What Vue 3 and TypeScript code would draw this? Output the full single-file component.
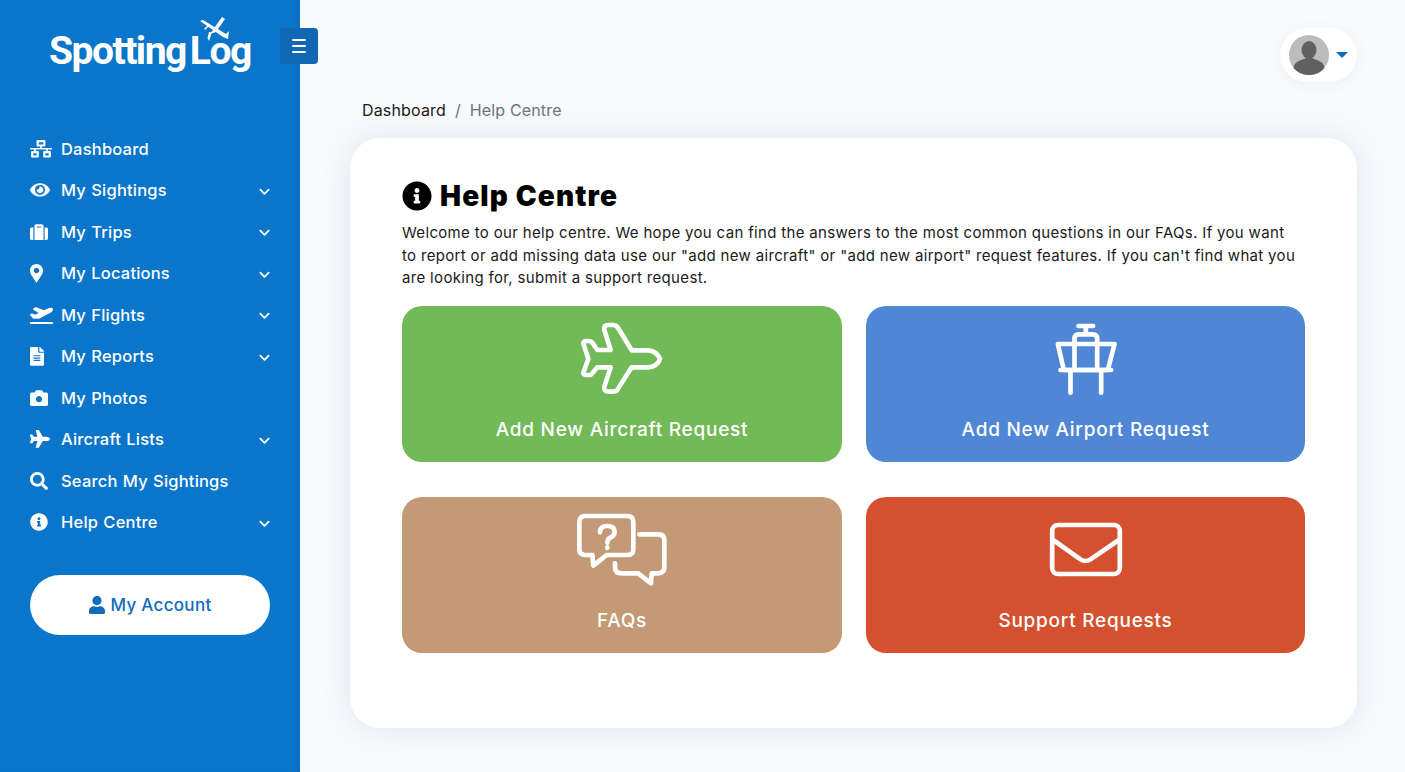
<template>
  <div class="app">
    <aside class="sidebar">
      <div class="logo">
        <span class="logo-text">Spotting<span class="logo-gap">Log</span></span>
        <svg class="logo-plane" viewBox="0 0 31 26" fill="#fff">
          <path d="M1 5 L4 4 L27 18 L30 15 L29 23 L24 21 Z" />
          <path d="M23 1 L26 3 L17 16 L11 18 Z" />
          <path d="M13 16 L10 25 L8.5 22 L10 16 Z" />
          <path d="M9 9 L10 10 L6 14 L5 13 Z" />
        </svg>
      </div>
      <button class="toggle" type="button" aria-label="Toggle menu">
        <span></span><span></span><span></span>
      </button>

      <nav class="nav">
        <a v-for="item in navItems" :key="item.label" class="nav-item">
          <span class="nav-icon">
            <svg :viewBox="item.box" :width="item.size" fill="#fff"><path :d="item.d" /></svg>
          </span>
          <span class="nav-label">{{ item.label }}</span>
          <svg v-if="item.sub" class="chev" viewBox="0 0 12 8" width="11" height="8">
            <path d="M1.5 1.5 L6 6 L10.5 1.5" fill="none" stroke="#fff" stroke-width="2" stroke-linecap="round" stroke-linejoin="round" />
          </svg>
        </a>
      </nav>

      <button class="account" type="button">
        <svg viewBox="0 0 448 512" width="16" fill="#0f6cbd"><path :d="icons.user" /></svg>
        <span>My Account</span>
      </button>
    </aside>

    <main class="main">
      <header class="topbar">
        <div class="profile">
          <svg viewBox="0 0 40 40" width="40" height="40">
            <circle cx="20" cy="20" r="20" fill="#bcbcbc" />
            <ellipse cx="20" cy="15" rx="7.5" ry="9" fill="#616161" />
            <path d="M4.5 33 C5 26 13 25 17 23 H23 C27 25 35 26 35.5 33 A20 20 0 0 1 20 40 A20 20 0 0 1 4.5 33 Z" fill="#616161" />
          </svg>
          <span class="caret"></span>
        </div>
      </header>

      <div class="crumbs">
        <span class="crumb-link">Dashboard</span>
        <span class="crumb-sep">/</span>
        <span class="crumb-now">Help Centre</span>
      </div>

      <section class="card">
        <h1 class="title">
          <svg viewBox="0 0 512 512" width="30" height="30" fill="#000"><path :d="icons.info" /></svg>
          <span>Help Centre</span>
        </h1>
        <p class="intro">
          Welcome to our help centre. We hope you can find the answers to the most common questions in our FAQs. If you want<br />
          to report or add missing data use our "add new aircraft" or "add new airport" request features. If you can't find what you<br />
          are looking for, submit a support request.
        </p>

        <div class="tiles">
          <a class="tile green">
            <svg class="tile-icon" viewBox="6 0 480 270">
              <path d="M360 147 Q352 124 325 121 H275 L233 52 Q228 45 218 45 H205 Q190 45 193 60 L212 120 H172 L157 98 Q154 93 148 93 H138 Q128 93 131 103 L145 147 L131 185 Q128 195 138 195 H148 Q154 195 157 190 L172 172 H212 L193 230 Q190 245 205 245 H218 Q228 245 233 238 L275 172 H325 Q352 170 360 147 Z" />
            </svg>
            <span>Add New Aircraft Request</span>
          </a>
          <a class="tile blue">
            <svg class="tile-icon" viewBox="-13.5 0 480 270">
              <path d="M204 48 H248 M226 48 V72 M192 100 V86 Q192 73 205 73 H247 Q260 73 260 86 V100" />
              <path d="M142 102 H312 L292 180 H160 Z" />
              <path d="M150 180 H302 M192 102 V180 M260 102 V180 M180 180 V248 M272 180 V248" />
            </svg>
            <span>Add New Airport Request</span>
          </a>
          <a class="tile tan">
            <svg class="tile-icon" viewBox="-24 -12 480 270">
              <path d="M106 33 H232 Q250 33 250 51 V132 Q250 150 232 150 H170 L130 182 L127 150 H106 Q88 150 88 132 V51 Q88 33 106 33 Z" />
              <path d="M268 88 H325 Q343 88 343 106 V187 Q343 205 325 205 H305 L303 235 L265 205 H215 Q195 205 195 185 V175" />
              <path d="M150 82 Q150 63 172 63 Q194 63 194 81 Q194 92 182 97 Q172 102 172 113" />
              <path d="M172 127 V129" />
            </svg>
            <span>FAQs</span>
          </a>
          <a class="tile red">
            <svg class="tile-icon" viewBox="-73.5 -27 480 270">
              <rect x="65" y="45" width="203" height="147" rx="18" />
              <path d="M68 90 L150 148 Q165 158 180 148 L265 90" />
            </svg>
            <span>Support Requests</span>
          </a>
        </div>
      </section>
    </main>
  </div>
</template>

<script setup lang="ts">
// Font Awesome style glyphs for the side menu
const icons = {
  network: 'M640 264v-16c0-8.84-7.16-16-16-16H344v-40h72c17.67 0 32-14.33 32-32V32c0-17.67-14.33-32-32-32H224c-17.67 0-32 14.33-32 32v128c0 17.67 14.33 32 32 32h72v40H16c-8.84 0-16 7.16-16 16v16c0 8.84 7.16 16 16 16h104v40H64c-17.67 0-32 14.33-32 32v128c0 17.67 14.33 32 32 32h160c17.67 0 32-14.33 32-32V352c0-17.67-14.33-32-32-32h-56v-40h304v40h-56c-17.67 0-32 14.33-32 32v128c0 17.67 14.33 32 32 32h160c17.67 0 32-14.33 32-32V352c0-17.67-14.33-32-32-32h-56v-40h104c8.84 0 16-7.16 16-16zM256 128V64h128v64H256zm-64 320H96v-64h96v64zm352 0h-96v-64h96v64z',
  eye: 'M572.52 241.4C518.29 135.59 410.93 64 288 64S57.68 135.64 3.48 241.41a32.35 32.35 0 0 0 0 29.19C57.71 376.41 165.07 448 288 448s230.32-71.64 284.52-177.41a32.35 32.35 0 0 0 0-29.19zM288 400a144 144 0 1 1 144-144 143.93 143.93 0 0 1-144 144zm0-240a95.31 95.31 0 0 0-25.31 3.79 47.85 47.85 0 0 1-66.9 66.9A95.78 95.78 0 1 0 288 160z',
  suitcase: 'M128 480h256V80c0-26.5-21.5-48-48-48H176c-26.5 0-48 21.5-48 48v400zm64-384h128v32H192V96zm320 80v256c0 26.5-21.5 48-48 48h-48V128h48c26.5 0 48 21.5 48 48zM96 480H48c-26.5 0-48-21.5-48-48V176c0-26.5 21.5-48 48-48h48v352z',
  marker: 'M172.268 501.67C26.97 291.031 0 256 0 176 0 78.798 78.798 0 176 0s176 78.798 176 176c0 80-26.97 115.031-172.268 325.67-9.535 13.774-29.93 13.773-39.464 0zM176 248c39.765 0 72-32.235 72-72s-32.235-72-72-72-72 32.235-72 72 32.235 72 72 72z',
  departure: 'M624 448H16c-8.84 0-16 7.16-16 16v32c0 8.84 7.16 16 16 16h608c8.84 0 16-7.16 16-16v-32c0-8.84-7.16-16-16-16zM80.55 341.27c6.28 6.84 15.1 10.72 24.33 10.71l130.54-.18a65.62 65.62 0 0 0 29.64-7.12l290.96-147.65c26.74-13.57 50.71-32.94 67.02-58.31 18.31-28.48 20.3-49.09 13.07-63.65-7.21-14.57-24.74-25.27-58.25-27.45-29.85-1.94-59.54 5.92-86.28 19.48l-98.51 49.99-218.7-82.06a17.799 17.799 0 0 0-18-1.11L90.62 67.29c-10.67 5.41-13.25 19.65-5.17 28.53l156.22 98.1-103.21 52.38-72.35-36.47a17.804 17.804 0 0 0-16.07.02L9.91 230.22c-10.44 5.3-13.19 19.12-5.57 28.08l76.21 82.97z',
  file: 'M224 136V0H24C10.7 0 0 10.7 0 24v464c0 13.3 10.7 24 24 24h336c13.3 0 24-10.7 24-24V160H248c-13.2 0-24-10.8-24-24zm64 236c0 6.6-5.4 12-12 12H108c-6.6 0-12-5.4-12-12v-8c0-6.6 5.4-12 12-12h168c6.6 0 12 5.4 12 12v8zm0-64c0 6.6-5.4 12-12 12H108c-6.6 0-12-5.4-12-12v-8c0-6.6 5.4-12 12-12h168c6.6 0 12 5.4 12 12v8zm0-72v8c0 6.6-5.4 12-12 12H108c-6.6 0-12-5.4-12-12v-8c0-6.6 5.4-12 12-12h168c6.6 0 12 5.4 12 12zm96-114.1v6.1H256V0h6.1c6.4 0 12.5 2.5 17 7l97.9 98c4.5 4.5 7 10.6 7 16.9z',
  camera: 'M512 144v288c0 26.5-21.5 48-48 48H48c-26.5 0-48-21.5-48-48V144c0-26.5 21.5-48 48-48h88l12.3-32.9c7-18.7 24.9-31.1 44.9-31.1h125.5c20 0 37.9 12.4 44.9 31.1L376 96h88c26.5 0 48 21.5 48 48zM344 288c0-48.5-39.5-88-88-88s-88 39.5-88 88 39.5 88 88 88 88-39.5 88-88z',
  plane: 'M480 192H365.71L260.61 8.06A16.014 16.014 0 0 0 246.71 0h-65.5c-10.63 0-18.3 10.17-15.38 20.39L214.86 192H112l-43.2-57.6c-3.02-4.03-7.77-6.4-12.8-6.4H16.01C5.6 128-2.04 137.78.49 147.88L32 256 .49 364.12C-2.04 374.22 5.6 384 16.01 384H56c5.04 0 9.78-2.37 12.8-6.4L112 320h102.86l-49.03 171.6c-2.92 10.22 4.75 20.4 15.38 20.4h65.5c5.74 0 11.04-3.08 13.89-8.06L365.71 320H480c35.35 0 96-28.65 96-64s-60.65-64-96-64z',
  search: 'M505 442.7L405.3 343c-4.5-4.5-10.6-7-17-7H372c27.6-35.3 44-79.7 44-128C416 93.1 322.9 0 208 0S0 93.1 0 208s93.1 208 208 208c48.3 0 92.7-16.4 128-44v16.3c0 6.4 2.5 12.5 7 17l99.7 99.7c9.4 9.4 24.6 9.4 33.9 0l28.3-28.3c9.4-9.4 9.4-24.6.1-34zM208 336c-70.7 0-128-57.2-128-128 0-70.7 57.2-128 128-128 70.7 0 128 57.2 128 128 0 70.7-57.2 128-128 128z',
  info: 'M256 8C119.043 8 8 119.083 8 256c0 136.997 111.043 248 248 248s248-111.003 248-248C504 119.083 392.957 8 256 8zm0 110c23.196 0 42 18.804 42 42s-18.804 42-42 42-42-18.804-42-42 18.804-42 42-42zm56 254c0 6.627-5.373 12-12 12h-88c-6.627 0-12-5.373-12-12v-24c0-6.627 5.373-12 12-12h12v-64h-12c-6.627 0-12-5.373-12-12v-24c0-6.627 5.373-12 12-12h64c6.627 0 12 5.373 12 12v100h12c6.627 0 12 5.373 12 12v24z',
  user: 'M224 256c70.7 0 128-57.3 128-128S294.7 0 224 0 96 57.3 96 128s57.3 128 128 128zm89.6 32h-16.7c-22.2 10.2-46.9 16-72.9 16s-50.6-5.8-72.9-16h-16.7C60.2 288 0 348.2 0 422.4V464c0 26.5 21.5 48 48 48h352c26.5 0 48-21.5 48-48v-41.6c0-74.2-60.2-134.4-134.4-134.4z',
}

const navItems = [
  { label: 'Dashboard', d: icons.network, box: '0 0 640 512', size: 22, sub: false },
  { label: 'My Sightings', d: icons.eye, box: '0 0 576 512', size: 20, sub: true },
  { label: 'My Trips', d: icons.suitcase, box: '0 0 512 512', size: 18, sub: true },
  { label: 'My Locations', d: icons.marker, box: '0 0 352 512', size: 13, sub: true },
  { label: 'My Flights', d: icons.departure, box: '0 0 640 512', size: 23, sub: true },
  { label: 'My Reports', d: icons.file, box: '0 0 384 512', size: 14, sub: true },
  { label: 'My Photos', d: icons.camera, box: '0 0 512 512', size: 18, sub: false },
  { label: 'Aircraft Lists', d: icons.plane, box: '0 0 576 512', size: 20, sub: true },
  { label: 'Search My Sightings', d: icons.search, box: '0 0 512 512', size: 18, sub: false },
  { label: 'Help Centre', d: icons.info, box: '0 0 512 512', size: 18, sub: true },
]
</script>

<style>
html,
body {
  margin: 0;
  background: #f9fafc;
}
</style>

<style scoped>
.app {
  display: flex;
  height: 772px;
  overflow: hidden;
  background: #f9fafc;
  font-family: Inter, "Open Sans", sans-serif;
}

.sidebar {
  position: relative;
  flex: 0 0 300px;
  min-width: 0;
  padding: 0 30px;
  box-sizing: border-box;
  background: #0a76cb;
  box-shadow: inset -6px 0 6px -3px rgba(0, 0, 0, 0.09);
  color: #fff;
}

.logo {
  position: relative;
  height: 128px;
  padding: 24px 0 0 19px;
  box-sizing: border-box;
}

.logo-text {
  font-family: Roboto, sans-serif;
  font-size: 39px;
  line-height: 54px;
  font-weight: 700;
  letter-spacing: -1.5px;
  white-space: nowrap;
}

.logo-gap {
  margin-left: 4px;
}

.logo-plane {
  position: absolute;
  left: 169px;
  top: 16px;
  width: 31px;
  height: 26px;
}

.toggle {
  position: absolute;
  left: 280px;
  top: 28px;
  width: 38px;
  height: 36px;
  padding: 0;
  border: 0;
  border-radius: 4px;
  background: #1067b3;
  display: flex;
  flex-direction: column;
  align-items: center;
  justify-content: center;
  gap: 4px;
}

.toggle span {
  width: 14px;
  height: 2px;
  background: #fff;
  border-radius: 1px;
}

.nav {
  display: flex;
  flex-direction: column;
}

.nav-item {
  display: flex;
  align-items: center;
  height: 41.5px;
}

.nav-icon {
  flex: 0 0 31px;
  display: flex;
  align-items: center;
}

.nav-icon svg {
  display: block;
}

.nav-label {
  flex: 1;
  font-size: 16.5px;
  font-weight: 500;
  letter-spacing: 0.2px;
  word-spacing: 0.6px;
}

.chev {
  display: block;
  margin-top: 3px;
}

.account {
  display: flex;
  align-items: center;
  justify-content: center;
  gap: 6px;
  width: 240px;
  height: 60px;
  margin-top: 32px;
  padding: 0;
  border: 0;
  border-radius: 30px;
  background: #fff;
  color: #0f6cbd;
  font-family: inherit;
  font-size: 17px;
  font-weight: 500;
  letter-spacing: 0.3px;
}

.main {
  flex: 1;
  min-width: 0;
  padding: 28px 48px 0 50px;
}

.topbar {
  display: flex;
  justify-content: flex-end;
}

.profile {
  display: flex;
  align-items: center;
  gap: 7px;
  width: 77px;
  height: 54px;
  padding-left: 9px;
  box-sizing: border-box;
  border-radius: 27px;
  background: #fff;
  box-shadow: 0 2px 14px rgba(40, 80, 140, 0.06);
}

.profile svg {
  display: block;
}

.caret {
  width: 0;
  height: 0;
  border-left: 6px solid transparent;
  border-right: 6px solid transparent;
  border-top: 6px solid #0f6cbd;
}

.crumbs {
  display: flex;
  gap: 9px;
  height: 56px;
  padding-left: 12px;
  align-items: center;
  font-size: 16px;
  letter-spacing: 0.15px;
}

.crumb-link {
  color: #1a1a1a;
}

.crumb-sep,
.crumb-now {
  color: #6c757d;
}

.card {
  height: 590px;
  padding: 40px 52px 0;
  box-sizing: border-box;
  border-radius: 30px;
  background: #fff;
  box-shadow: 0 0 30px rgba(60, 110, 170, 0.15);
}

.title {
  display: flex;
  align-items: center;
  gap: 8px;
  margin: 0;
  height: 36px;
  font-size: 28px;
  font-weight: 900;
  letter-spacing: 1.15px;
  color: #000;
}

.title svg {
  display: block;
}

.intro {
  margin: 8px 0 0;
  font-size: 15px;
  line-height: 22.5px;
  letter-spacing: 0.33px;
  color: #1a1a1a;
  white-space: nowrap;
}

.tiles {
  display: grid;
  grid-template-columns: 440px 439px;
  grid-auto-rows: 156px;
  column-gap: 24px;
  row-gap: 35px;
  margin-top: 16px;
}

.tile {
  display: flex;
  flex-direction: column;
  align-items: center;
  padding-top: 4px;
  box-sizing: border-box;
  border-radius: 20px;
  color: #fff;
  font-size: 19px;
  font-weight: 500;
  letter-spacing: 0.75px;
}

.tile-icon {
  display: block;
  width: 160px;
  height: 90px;
  margin-bottom: 18px;
  fill: none;
  stroke: #fff;
  stroke-width: 14;
  stroke-linecap: round;
  stroke-linejoin: round;
}

.green {
  background: #72b958;
}

.blue {
  background: #4f86d5;
}

.tan {
  background: #c49a76;
}

.red {
  background: #d5502e;
}
</style>
